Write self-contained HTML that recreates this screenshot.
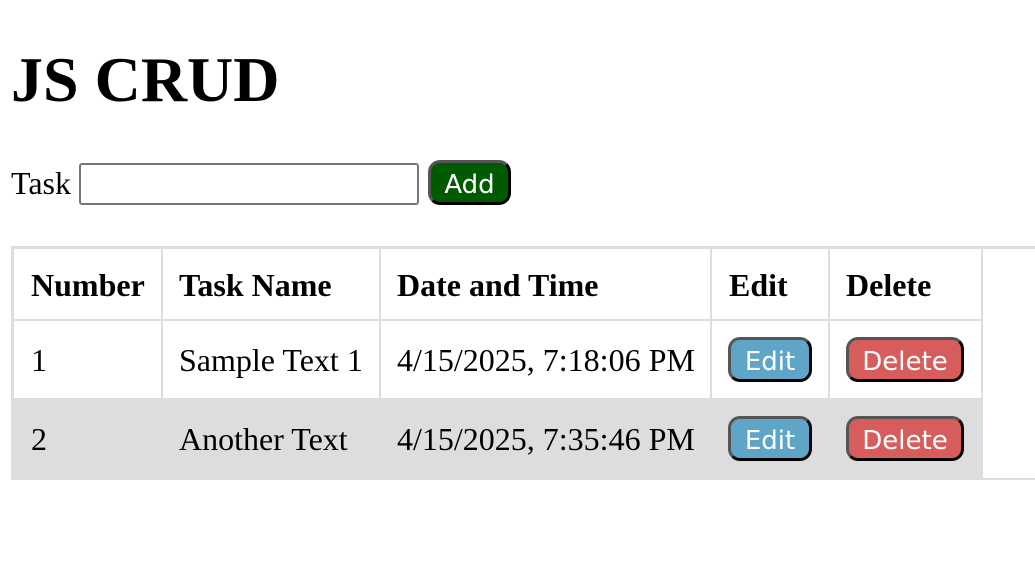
<!DOCTYPE html>
<html><head><style>
body{margin:0;width:1035px;height:565px;background:#fff;font-family:"Liberation Serif",serif;position:relative;overflow:hidden}
.a{position:absolute}
h1{position:absolute;left:11px;top:42px;margin:0;font-size:64px;line-height:76px;font-weight:bold}
.btn{position:absolute;box-sizing:border-box;border:3px solid;border-color:#555 #000 #000 #555;border-radius:12px;color:#fff;font-family:"DejaVu Sans",sans-serif;font-size:26px;text-align:center;line-height:44px}
.c{position:absolute;font-size:32px;line-height:36px}
.b{font-weight:bold}
.v{position:absolute;width:2px;background:#ddd}
.h{position:absolute;height:2px;background:#ddd}
</style></head><body>
<h1>JS CRUD</h1>
<div class="c" style="left:11px;top:165px">Task</div>
<div class="a" style="left:79px;top:163px;width:340px;height:42px;box-sizing:border-box;border:2px solid #767676;border-radius:3px"></div>
<div class="btn" style="left:428px;top:160px;width:83px;height:45px;background:#005a00">Add</div>

<div class="a" style="left:11px;top:398px;width:971px;height:81px;background:#ddd"></div>
<div class="h" style="left:11px;top:246px;width:1024px;height:3px"></div>
<div class="h" style="left:11px;top:478px;width:1024px"></div>
<div class="v" style="left:11px;top:246px;height:234px;width:3px"></div>
<div class="v" style="left:981px;top:246px;height:234px;width:2px"></div>
<div class="h" style="left:14px;top:319px;width:968px"></div>
<div class="v" style="left:161px;top:249px;height:149px"></div>
<div class="v" style="left:379px;top:249px;height:149px"></div>
<div class="v" style="left:710px;top:249px;height:149px"></div>
<div class="v" style="left:828px;top:249px;height:149px"></div>

<div class="c b" style="left:31px;top:267px">Number</div>
<div class="c b" style="left:179px;top:267px">Task Name</div>
<div class="c b" style="left:397px;top:267px">Date and Time</div>
<div class="c b" style="left:729px;top:267px">Edit</div>
<div class="c b" style="left:846px;top:267px">Delete</div>

<div class="c" style="left:31px;top:342px">1</div>
<div class="c" style="left:179px;top:342px">Sample Text 1</div>
<div class="c" style="left:397px;top:342px">4/15/2025, 7:18:06 PM</div>
<div class="btn" style="left:728px;top:337px;width:84px;height:45px;background:#5ea5c8">Edit</div>
<div class="btn" style="left:846px;top:337px;width:118px;height:45px;background:#d75d5d">Delete</div>

<div class="c" style="left:31px;top:421px">2</div>
<div class="c" style="left:179px;top:421px">Another Text</div>
<div class="c" style="left:397px;top:421px">4/15/2025, 7:35:46 PM</div>
<div class="btn" style="left:728px;top:416px;width:84px;height:45px;background:#5ea5c8">Edit</div>
<div class="btn" style="left:846px;top:416px;width:118px;height:45px;background:#d75d5d">Delete</div>
</body></html>
